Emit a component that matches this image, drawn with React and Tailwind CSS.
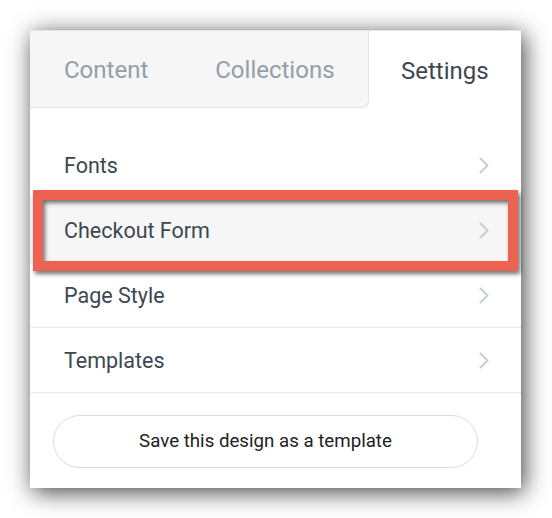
import React from 'react';

const Chevron = () => (
  <svg width="10" height="17" viewBox="0 0 10 17" fill="none" className="shrink-0">
    <polyline points="1.5,1.5 8.5,8.5 1.5,15.5" stroke="#c9ced3" strokeWidth="2" strokeLinecap="round" strokeLinejoin="round" />
  </svg>
);

const rows = ['Fonts', 'Checkout Form', 'Page Style', 'Templates'];

export default function App() {
  return (
    <div className="w-[552px] h-[518px] bg-white pt-[30px] pl-[30px] font-['Roboto',sans-serif]">
      <div className="w-[491px] h-[458px] bg-white border-t border-[#dfe4e8] shadow-[3px_4px_22px_rgba(0,0,0,0.75)] flex flex-col">
        {/* Tabs */}
        <div className="flex h-[77px]">
          <div className="flex bg-[#f6f6f7] border-b border-r border-[#e1e5e8] rounded-br-[7px]">
            <div className="px-[34px] pt-[2px] flex items-center text-[24px] text-[#949ea6]">Content</div>
            <div className="px-[33px] pt-[2px] flex items-center text-[24px] text-[#949ea6]">Collections</div>
          </div>
          <div className="flex-1 pt-[2px] flex items-center justify-center text-[24px] text-[#3d4751]">Settings</div>
        </div>

        {/* Rows */}
        <div className="mt-[25px] flex flex-col">
          {rows.map((label) => {
            const active = label === 'Checkout Form';
            return (
              <div
                key={label}
                className={`relative h-[65px] flex items-center justify-between pl-[34px] pr-[32px] border-b border-[#e9ebed] ${active ? 'bg-[#f6f6f6]' : ''}`}
              >
                <span className="pt-[2px] text-[21.5px] text-[#3d4751]">{label}</span>
                <Chevron />
                {active && (
                  <div className="absolute -top-[8px] -bottom-[9px] left-[3px] right-[3px] border-[10px] border-[#ec6354] drop-shadow-[2px_3px_2px_rgba(0,0,0,0.55)]" />
                )}
              </div>
            );
          })}
        </div>

        {/* Save button */}
        <div className="pt-[22px] pl-[23px]">
          <button className="w-[425px] h-[53px] rounded-full border border-[#d6dde3] bg-white text-[18.7px] text-[#222] flex items-center justify-center">
            Save this design as a template
          </button>
        </div>
      </div>
    </div>
  );
}
